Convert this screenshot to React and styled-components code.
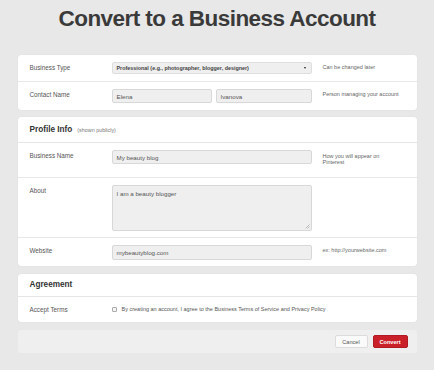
import React from "react";
import styled, { createGlobalStyle } from "styled-components";

const Global = createGlobalStyle`
  html, body { margin: 0; padding: 0; background: #e8e8e8; }
  body { font-family: "Liberation Sans", Arial, sans-serif; color: #555; }
  * { box-sizing: border-box; }
`;

const Page = styled.div`
  width: 399px;
  margin: 0 auto;
  padding-bottom: 20px;
`;

const Title = styled.h1`
  margin: 0;
  height: 55px;
  padding-top: 6px;
  font-size: 22.5px;
  line-height: 26px;
  letter-spacing: -0.55px;
  font-weight: bold;
  color: #3a3a3a;
  text-align: center;
`;

const Card = styled.section`
  background: #fff;
  border-radius: 3px;
  box-shadow: 0 0 1px rgba(0, 0, 0, 0.12);
  margin-bottom: ${(p) => p.$gap || 7}px;
`;

const CardHeader = styled.div`
  height: ${(p) => p.$h}px;
  display: flex;
  align-items: center;
  padding-left: 12px;
  border-bottom: 1px solid #e6e6e6;
`;

const HeaderTitle = styled.h2`
  margin: 0;
  font-size: 8.2px;
  font-weight: bold;
  color: #333;
`;

const HeaderNote = styled.span`
  font-size: 5.4px;
  color: #777;
  margin-left: 5px;
`;

const Row = styled.div`
  display: grid;
  grid-template-columns: 82px 200px 1fr;
  align-items: start;
  padding: ${(p) => p.$pt ?? 7}px 0 ${(p) => p.$pb ?? 7}px 12px;
  border-bottom: ${(p) => (p.$last ? "none" : "1px solid #e8e8e8")};
`;

const Label = styled.div`
  font-size: 6.3px;
  line-height: 7px;
  padding-top: 2px;
  color: #555;
`;

const Hint = styled.div`
  font-size: 5.5px;
  line-height: 6.5px;
  padding-top: ${(p) => p.$pt ?? 2.3}px;
  margin-left: 11px;
  color: #666;
`;

const FieldPair = styled.div`
  display: grid;
  grid-template-columns: 100px 96px;
  column-gap: 4px;
`;

const Input = styled.div`
  height: ${(p) => p.$h || 14}px;
  background: #efefef;
  border: 1px solid #d8d8d8;
  border-radius: 2px;
  font-size: 6.2px;
  color: #555;
  padding: ${(p) => (p.$area ? "4px 4px" : "0 4px")};
  display: flex;
  align-items: ${(p) => (p.$area ? "flex-start" : "center")};
  position: relative;
`;

const Grip = styled.svg`
  position: absolute;
  right: 1px;
  bottom: 1px;
`;

const Select = styled.div`
  height: 12px;
  background: #efefef;
  border: 1px solid #dedede;
  border-radius: 2px;
  font-size: 5.4px;
  font-weight: bold;
  color: #444;
  padding: 0 4px;
  display: flex;
  align-items: center;
  justify-content: space-between;
`;

const Arrow = styled.span`
  width: 0;
  height: 0;
  border-left: 1.5px solid transparent;
  border-right: 1.5px solid transparent;
  border-top: 2.5px solid #222;
  margin-right: 1px;
`;

const Check = styled.span`
  width: 5px;
  height: 5px;
  border: 1px solid #aaa;
  border-radius: 1px;
  background: #f4f4f4;
  flex: none;
`;

const Terms = styled.div`
  grid-column: 2 / span 2;
  display: flex;
  align-items: center;
  gap: 5px;
  font-size: 5.5px;
  color: #555;
  padding-top: 2px;
  line-height: 7px;
`;

const Footer = styled.div`
  height: 23px;
  background: #efefef;
  border-radius: 3px;
  display: flex;
  justify-content: flex-end;
  align-items: center;
  gap: 5px;
  padding-right: 9px;
  padding-top: 1px;
`;

const Button = styled.button`
  height: 13px;
  width: ${(p) => p.$w}px;
  padding: 0;
  border-radius: 2px;
  font-family: inherit;
  font-size: 5.6px;
  font-weight: ${(p) => (p.$primary ? "bold" : "normal")};
  color: ${(p) => (p.$primary ? "#fff" : "#555")};
  background: ${(p) => (p.$primary ? "#c9202a" : "#fafafa")};
  border: 1px solid ${(p) => (p.$primary ? "#b01a23" : "#dcdcdc")};
`;

export default function App() {
  return (
    <>
      <Global />
      <Page>
        <Title>Convert to a Business Account</Title>

        <Card>
          <Row $pb={7}>
            <Label>Business Type</Label>
            <Select>
              <span>Professional (e.g., photographer, blogger, designer)</span>
              <Arrow />
            </Select>
            <Hint>Can be changed later</Hint>
          </Row>
          <Row $last $pb={7}>
            <Label>Contact Name</Label>
            <FieldPair>
              <Input>Elena</Input>
              <Input>Ivanova</Input>
            </FieldPair>
            <Hint>Person managing your account</Hint>
          </Row>
        </Card>

        <Card $gap={8}>
          <CardHeader $h={26}>
            <HeaderTitle>Profile Info</HeaderTitle>
            <HeaderNote>(shown publicly)</HeaderNote>
          </CardHeader>
          <Row $pb={11}>
            <Label>Business Name</Label>
            <Input>My beauty blog</Input>
            <Hint $pt={2.5}>
              How you will appear on
              <br />
              Pinterest
            </Hint>
          </Row>
          <Row $pb={6}>
            <Label>About</Label>
            <Input $area $h={46}>
              I am a beauty blogger
              <Grip width="5" height="5" viewBox="0 0 5 5">
                <path d="M4.5 0.5 L0.5 4.5 M4.5 2.5 L2.5 4.5" stroke="#999" strokeWidth="0.6" />
              </Grip>
            </Input>
            <div />
          </Row>
          <Row $last $pb={6}>
            <Label>Website</Label>
            <Input $h={15}>mybeautyblog.com</Input>
            <Hint>ex: http://yourwebsite.com</Hint>
          </Row>
        </Card>

        <Card $gap={8}>
          <CardHeader $h={23}>
            <HeaderTitle>Agreement</HeaderTitle>
          </CardHeader>
          <Row $last $pt={7} $pb={9}>
            <Label>Accept Terms</Label>
            <Terms>
              <Check />
              <span>
                By creating an account, I agree to the Business Terms of Service and Privacy Policy
              </span>
            </Terms>
          </Row>
        </Card>

        <Footer>
          <Button $w={33}>Cancel</Button>
          <Button $primary $w={35}>Convert</Button>
        </Footer>
      </Page>
    </>
  );
}
